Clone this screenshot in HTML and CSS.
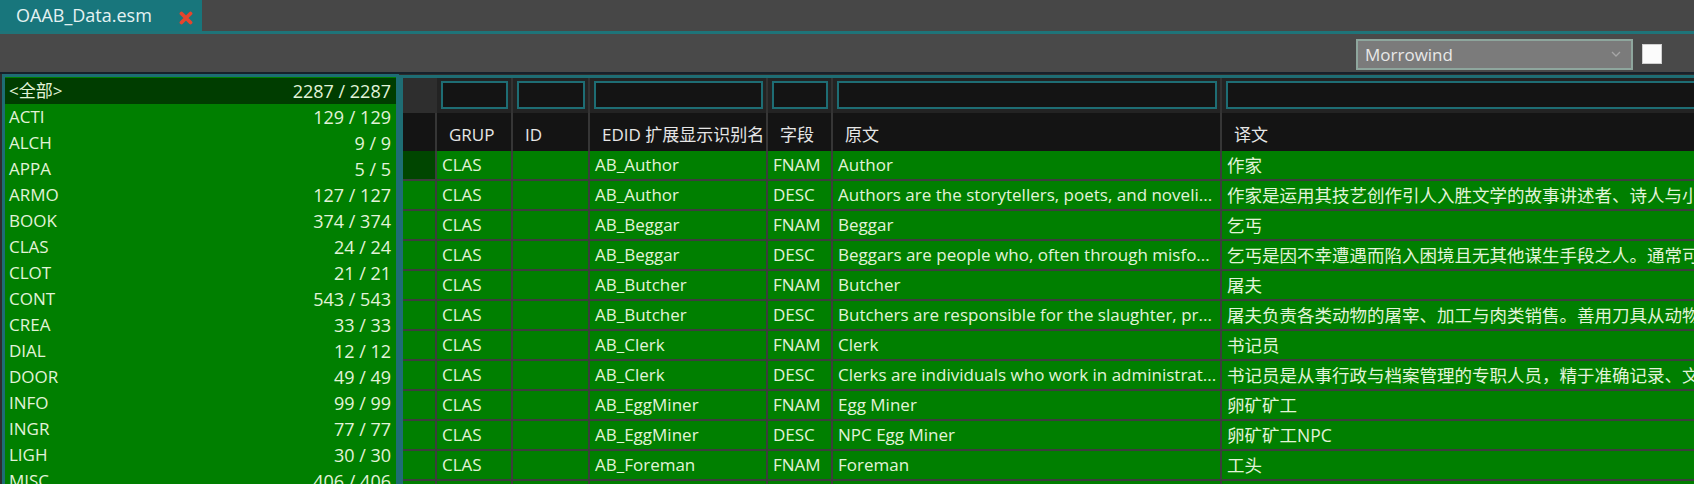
FILE: index.html
```html
<!DOCTYPE html>
<html lang="zh-CN">
<head>
  <meta charset="UTF-8" />
  <title>OAAB_Data.esm</title>
  <link rel="stylesheet" href="styles.css">
</head>
<body>
  <div class="tabbar">
    <div class="tab">
      <span class="tab-title">OAAB_Data.esm</span>
      <svg class="tab-close" width="14" height="14" viewBox="0 0 14 14">
        <path d="M2.5 2.5 L11.5 11.5 M11.5 2.5 L2.5 11.5" />
      </svg>
    </div>
  </div>

  <div class="toolbar">
    <div class="combo">
      <span>Morrowind</span>
      <svg class="combo-arrow" width="10" height="6" viewBox="0 0 10 6">
        <polyline points="1,1 5,5 9,1" />
      </svg>
    </div>
    <span class="check"></span>
  </div>

  <div class="main">
    <div class="side">
      <ul class="type-list">
        <li class="selected"><span>&lt;全部&gt;</span><span class="count">2287 / 2287</span></li>
        <li><span>ACTI</span><span class="count">129 / 129</span></li>
        <li><span>ALCH</span><span class="count">9 / 9</span></li>
        <li><span>APPA</span><span class="count">5 / 5</span></li>
        <li><span>ARMO</span><span class="count">127 / 127</span></li>
        <li><span>BOOK</span><span class="count">374 / 374</span></li>
        <li><span>CLAS</span><span class="count">24 / 24</span></li>
        <li><span>CLOT</span><span class="count">21 / 21</span></li>
        <li><span>CONT</span><span class="count">543 / 543</span></li>
        <li><span>CREA</span><span class="count">33 / 33</span></li>
        <li><span>DIAL</span><span class="count">12 / 12</span></li>
        <li><span>DOOR</span><span class="count">49 / 49</span></li>
        <li><span>INFO</span><span class="count">99 / 99</span></li>
        <li><span>INGR</span><span class="count">77 / 77</span></li>
        <li><span>LIGH</span><span class="count">30 / 30</span></li>
        <li><span>MISC</span><span class="count">406 / 406</span></li>
      </ul>
    </div>

    <div class="grid-panel">
      <div class="grid-row filter-row">
        <div class="corner"></div>
        <div class="cell"><span class="filter"></span></div>
        <div class="cell"><span class="filter"></span></div>
        <div class="cell"><span class="filter"></span></div>
        <div class="cell"><span class="filter"></span></div>
        <div class="cell"><span class="filter"></span></div>
        <div class="cell"><span class="filter"></span></div>
      </div>

      <div class="grid-row head-row">
        <div class="cell"></div>
        <div class="cell">GRUP</div>
        <div class="cell">ID</div>
        <div class="cell clip">EDID 扩展显示识别名</div>
        <div class="cell">字段</div>
        <div class="cell">原文</div>
        <div class="cell">译文</div>
      </div>

      <div class="grid-row data-row current">
        <div class="cell rowhead"></div>
        <div class="cell">CLAS</div><div class="cell"></div><div class="cell">AB_Author</div><div class="cell">FNAM</div>
        <div class="cell">Author</div><div class="cell zh">作家</div>
      </div>
      <div class="grid-row data-row">
        <div class="cell rowhead"></div>
        <div class="cell">CLAS</div><div class="cell"></div><div class="cell">AB_Author</div><div class="cell">DESC</div>
        <div class="cell">Authors are the storytellers, poets, and noveli...</div>
        <div class="cell zh">作家是运用其技艺创作引人入胜文学的故事讲述者、诗人与小说家。</div>
      </div>
      <div class="grid-row data-row">
        <div class="cell rowhead"></div>
        <div class="cell">CLAS</div><div class="cell"></div><div class="cell">AB_Beggar</div><div class="cell">FNAM</div>
        <div class="cell">Beggar</div><div class="cell zh">乞丐</div>
      </div>
      <div class="grid-row data-row">
        <div class="cell rowhead"></div>
        <div class="cell">CLAS</div><div class="cell"></div><div class="cell">AB_Beggar</div><div class="cell">DESC</div>
        <div class="cell">Beggars are people who, often through misfo...</div>
        <div class="cell zh">乞丐是因不幸遭遇而陷入困境且无其他谋生手段之人。通常可见于城镇街头。</div>
      </div>
      <div class="grid-row data-row">
        <div class="cell rowhead"></div>
        <div class="cell">CLAS</div><div class="cell"></div><div class="cell">AB_Butcher</div><div class="cell">FNAM</div>
        <div class="cell">Butcher</div><div class="cell zh">屠夫</div>
      </div>
      <div class="grid-row data-row">
        <div class="cell rowhead"></div>
        <div class="cell">CLAS</div><div class="cell"></div><div class="cell">AB_Butcher</div><div class="cell">DESC</div>
        <div class="cell">Butchers are responsible for the slaughter, pr...</div>
        <div class="cell zh">屠夫负责各类动物的屠宰、加工与肉类销售。善用刀具从动物身上取肉。</div>
      </div>
      <div class="grid-row data-row">
        <div class="cell rowhead"></div>
        <div class="cell">CLAS</div><div class="cell"></div><div class="cell">AB_Clerk</div><div class="cell">FNAM</div>
        <div class="cell">Clerk</div><div class="cell zh">书记员</div>
      </div>
      <div class="grid-row data-row">
        <div class="cell rowhead"></div>
        <div class="cell">CLAS</div><div class="cell"></div><div class="cell">AB_Clerk</div><div class="cell">DESC</div>
        <div class="cell">Clerks are individuals who work in administrat...</div>
        <div class="cell zh">书记员是从事行政与档案管理的专职人员，精于准确记录、文书与账目。</div>
      </div>
      <div class="grid-row data-row">
        <div class="cell rowhead"></div>
        <div class="cell">CLAS</div><div class="cell"></div><div class="cell">AB_EggMiner</div><div class="cell">FNAM</div>
        <div class="cell">Egg Miner</div><div class="cell zh">卵矿矿工</div>
      </div>
      <div class="grid-row data-row">
        <div class="cell rowhead"></div>
        <div class="cell">CLAS</div><div class="cell"></div><div class="cell">AB_EggMiner</div><div class="cell">DESC</div>
        <div class="cell">NPC Egg Miner</div><div class="cell zh">卵矿矿工NPC</div>
      </div>
      <div class="grid-row data-row">
        <div class="cell rowhead"></div>
        <div class="cell">CLAS</div><div class="cell"></div><div class="cell">AB_Foreman</div><div class="cell">FNAM</div>
        <div class="cell">Foreman</div><div class="cell zh">工头</div>
      </div>
      <div class="grid-row data-row">
        <div class="cell rowhead"></div>
        <div class="cell">CLAS</div><div class="cell"></div><div class="cell">AB_Foreman</div><div class="cell">DESC</div>
        <div class="cell">Foremen oversee the labor of others.</div><div class="cell zh">工头负责监督他人劳作。</div>
      </div>
    </div>
  </div>
</body>
</html>
```

FILE: styles.css
```css
:root {
  --teal: #1e6d74;
  --tab-teal: #18767c;
  --green: #007f00;
  --green-dark: #003d00;
  --green-text: #e2f3d9;
  --grid-line: #3d3d3d;
  --font: "Open Sans", "Noto Sans CJK SC", sans-serif;
}

html, body {
  margin: 0;
  padding: 0;
  height: 100%;
  overflow: hidden;
  background: #474747;
  font-family: var(--font);
  font-size: 17px;
}

/* tab strip */
.tabbar {
  height: 31px;
  border-bottom: 3px solid #1f7479;
  display: flex;
}

.tab {
  width: 202px;
  box-sizing: border-box;
  background: var(--tab-teal);
  display: flex;
  align-items: center;
  padding: 0 9px 0 16px;
}

.tab-title {
  color: #e4f2f2;
  font-size: 18px;
  line-height: 31px;
}

.tab-close {
  margin-left: auto;
  margin-top: 4px;
}

.tab-close path {
  stroke: #e5452d;
  stroke-width: 3.8;
  stroke-linecap: round;
  fill: none;
}

/* toolbar */
.toolbar {
  height: 38px;
  background: #494949;
  display: flex;
  align-items: center;
  justify-content: flex-end;
  padding-right: 32px;
}

.combo {
  width: 277px;
  height: 31px;
  box-sizing: border-box;
  background: #7b7b7b;
  border: 2px solid #8ea69d;
  display: flex;
  align-items: center;
  padding: 0 8px 0 7px;
  color: #e8e8e8;
  margin-top: 2px;
}

.combo-arrow {
  margin-left: auto;
  margin-right: 2px;
}

.combo-arrow polyline {
  stroke: #a6a6a6;
  stroke-width: 1.3;
  fill: none;
}

.check {
  width: 20px;
  height: 20px;
  box-sizing: border-box;
  background: #fbfbfb;
  border: 1px solid #cfcfcf;
  margin-left: 9px;
  margin-top: 1px;
}

/* main area */
.main {
  display: flex;
  height: 412px;
  box-sizing: border-box;
  border-top: 2px solid #17212b;
  background: #2d2d2d;
}

.side {
  width: 399px;
  flex: none;
  box-sizing: border-box;
  padding: 0 0 0 2px;
}

.type-list {
  list-style: none;
  margin: 0;
  padding: 1px 0 0 0;
  height: 100%;
  box-sizing: border-box;
  border: 3px solid var(--teal);
  border-bottom: 0;
  background: var(--green);
  color: var(--green-text);
}

.type-list li {
  display: flex;
  justify-content: space-between;
  height: 26px;
  line-height: 26px;
  padding: 0 5px 0 4px;
}

.type-list .count {
  font-size: 18px;
}

.type-list li.selected {
  background: var(--green-dark);
}

.grid-panel {
  flex: 1;
  min-width: 0;
  overflow: hidden;
  border-top: 3px solid var(--teal);
  border-left: 4px solid var(--teal);
  margin-top: 1px;
}

.grid-row {
  display: grid;
  grid-template-columns: 34px 76px 77px 178px 65px 389px 1000px;
}

.cell {
  box-sizing: border-box;
  border-right: 2px solid var(--grid-line);
  white-space: nowrap;
  overflow: hidden;
  text-overflow: ellipsis;
}

.cell.clip {
  text-overflow: clip;
}

.filter-row {
  height: 35px;
  background: #232323;
}

.filter-row .corner {
  background: #2e2e2e;
}

.filter-row .cell {
  padding: 3px 3px 4px 4px;
  border-right-color: #333;
}

.filter {
  display: block;
  height: 28px;
  box-sizing: border-box;
  background: #141414;
  border: 2px solid var(--teal);
}

.head-row {
  height: 38px;
  background: #141414;
  color: #e6e6e6;
}

.head-row .cell {
  padding: 6px 0 0 12px;
  line-height: 32px;
  border-right-color: #363636;
}

.data-row {
  height: 30px;
  background: var(--green);
  color: var(--green-text);
}

.data-row .cell {
  line-height: 28px;
  border-bottom: 2px solid var(--grid-line);
  padding-left: 5px;
}

.data-row .cell.zh {
  font-size: 17.5px;
}

.data-row.current .rowhead {
  background: #004600;
}
```
